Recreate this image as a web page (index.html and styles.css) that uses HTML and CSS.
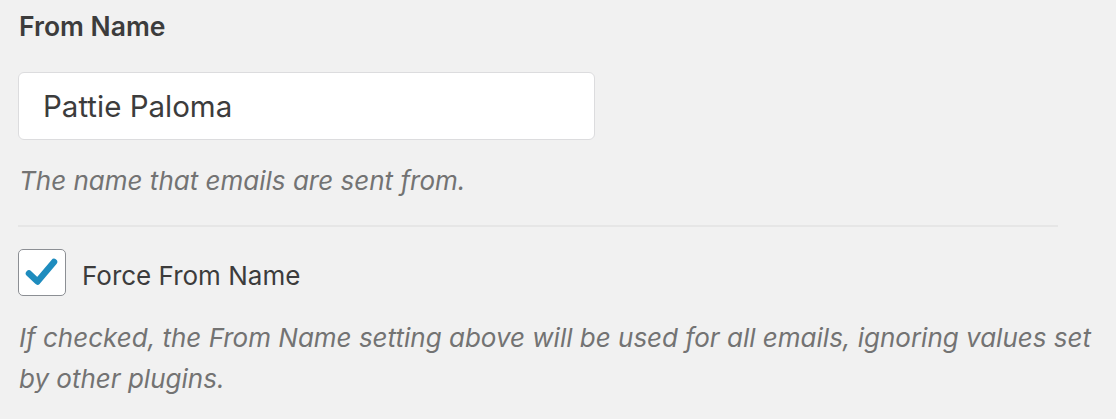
FILE: index.html
```html
<!DOCTYPE html>
<html lang="en">
<head>
    <meta charset="UTF-8">
    <title>From Name</title>
    <link rel="stylesheet" href="styles.css">
</head>
<body>
    <main class="settings">
        <section class="field">
            <label class="field-title" for="from-name">From Name</label>
            <input class="text-input" id="from-name" type="text" value="Pattie Paloma">
            <p class="description">The name that emails are sent from.</p>
        </section>
        <hr class="divider">
        <section class="field">
            <label class="check-row">
                <span class="checkbox">
                    <svg viewBox="0 0 48 47" width="48" height="47">
                        <path d="M11 24.5 L19.5 32.5 L36 13" fill="none" stroke="#1e8cbe" stroke-width="6.5" stroke-linecap="round" stroke-linejoin="round"/>
                    </svg>
                </span>
                <span class="check-label">Force From Name</span>
            </label>
            <p class="description">If checked, the From Name setting above will be used for all emails, ignoring values set by other plugins.</p>
        </section>
    </main>
</body>
</html>
```

FILE: styles.css
```css
* {
    margin: 0;
    padding: 0;
    box-sizing: border-box;
}

body {
    font-family: 'Inter', 'Liberation Sans', sans-serif;
    background-color: #f1f1f1;
    color: #3c434a;
}

.settings {
    width: 1098px;
    margin-left: 18px;
    padding-top: 10px;
}

.field {
    display: flex;
    flex-direction: column;
    align-items: flex-start;
}

.field-title {
    font-size: 26.5px;
    font-weight: 600;
    line-height: 32px;
    color: #3c3c3c;
    padding-left: 1px;
}

.text-input {
    margin-top: 30px;
    width: 577px;
    height: 68px;
    padding: 0 24px;
    font-family: inherit;
    font-size: 29.5px;
    color: #3c3c3c;
    background-color: #fff;
    border: 1.5px solid #dcdcde;
    border-radius: 6px;
    outline: none;
}

.description {
    font-size: 26px;
    font-style: italic;
    line-height: 41px;
    color: #737373;
    padding-left: 1px;
}

.text-input + .description {
    margin-top: 20px;
}

.divider {
    width: 1040px;
    border: none;
    border-top: 2px solid #e6e6e6;
    margin: 24px 0 22px;
}

.check-row {
    display: flex;
    align-items: center;
    gap: 16px;
}

.checkbox {
    width: 48px;
    height: 47px;
    border: 1.5px solid #8c8f94;
    border-radius: 5px;
    background-color: #fff;
    display: flex;
}

.checkbox svg {
    margin: -1.5px;
}

.check-label {
    font-size: 26px;
    color: #3c3c3c;
    padding-top: 6px;
}

.check-row + .description {
    margin-top: 21px;
}
```
